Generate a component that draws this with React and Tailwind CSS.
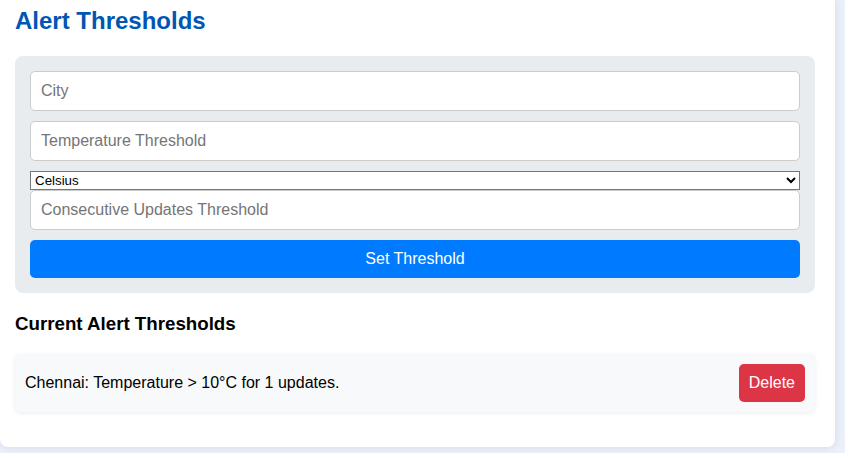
import React, { useState } from "react";

export default function App() {
  const [thresholds, setThresholds] = useState([
    { id: 1, city: "Chennai", temp: 10, unit: "C", count: 1 },
  ]);

  const handleDelete = (id) => {
    setThresholds((prev) => prev.filter((t) => t.id !== id));
  };

  return (
    <div className="min-h-[453px] bg-[#eaf1fa] font-['Liberation_Sans',Arial,sans-serif]">
      {/* Card */}
      <div className="w-[835px] bg-white rounded-b-lg shadow-[0_0_10px_rgba(0,0,0,0.1)] pl-[15px] pr-[20px] pt-[7px] pb-[35px]">
        <h2 className="text-[24px] leading-[28px] font-bold text-[#0056b3] mb-[21px]">
          Alert Thresholds
        </h2>

        {/* Form */}
        <div className="bg-[#e9ecef] rounded-lg p-[15px] flex flex-col">
          <input
            type="text"
            placeholder="City"
            className="w-full h-[40px] px-[10px] bg-white border border-[#ccc] rounded-[5px] text-[16px] text-black placeholder:text-[#757575] outline-none mb-[10px]"
          />
          <input
            type="number"
            placeholder="Temperature Threshold"
            className="w-full h-[40px] px-[10px] bg-white border border-[#ccc] rounded-[5px] text-[16px] text-black placeholder:text-[#757575] outline-none mb-[10px]"
          />
          <select className="w-full h-[19px] bg-white border border-[#767676] text-[13.33px] leading-[15px] text-black">
            <option>Celsius</option>
            <option>Fahrenheit</option>
            <option>Kelvin</option>
          </select>
          <input
            type="number"
            placeholder="Consecutive Updates Threshold"
            className="w-full h-[40px] px-[10px] bg-white border border-[#ccc] rounded-[5px] text-[16px] text-black placeholder:text-[#757575] outline-none mb-[10px]"
          />
          <button className="w-full h-[38px] bg-[#007bff] text-white text-[16px] rounded-[5px]">
            Set Threshold
          </button>
        </div>

        <h3 className="text-[18.72px] leading-[21px] font-bold text-black mt-[20px] mb-[20px]">
          Current Alert Thresholds
        </h3>

        <ul>
          {thresholds.map((t) => (
            <li
              key={t.id}
              className="flex items-center justify-between bg-[#f8f9fa] rounded-[5px] shadow-[0_1px_4px_rgba(0,0,0,0.08)] p-[10px]"
            >
              <span className="text-[16px] text-black">
                {t.city}: Temperature &gt; {t.temp}°{t.unit} for {t.count} updates.
              </span>
              <button
                onClick={() => handleDelete(t.id)}
                className="h-[38px] px-[10px] bg-[#dc3545] text-white text-[16px] rounded-[5px]"
              >
                Delete
              </button>
            </li>
          ))}
        </ul>
      </div>
    </div>
  );
}
